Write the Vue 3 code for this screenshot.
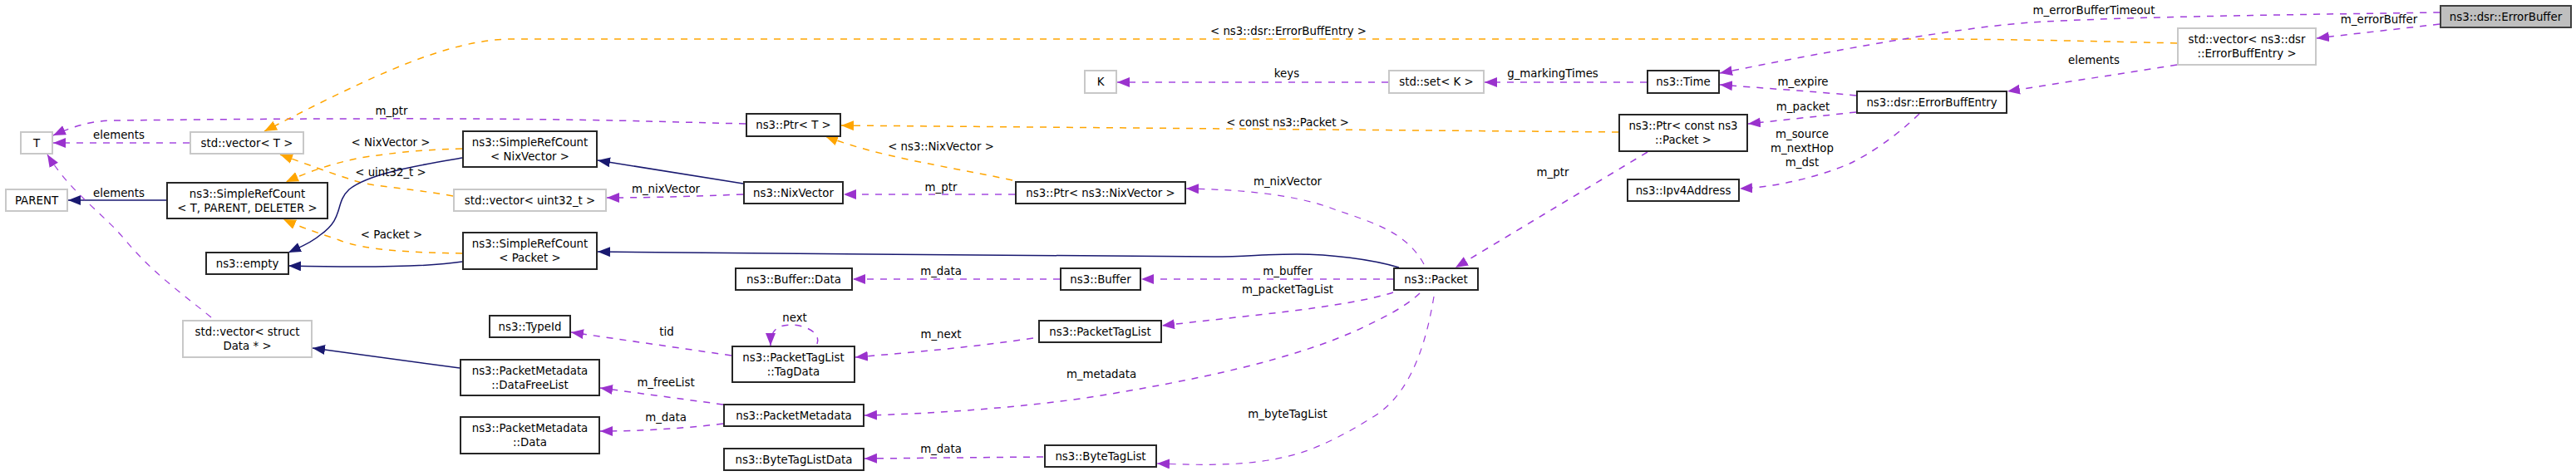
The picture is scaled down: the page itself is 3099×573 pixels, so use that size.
<script setup>
const nodes = [
  { x: 24, y: 158, w: 40, h: 28, kind: 'ghost', lines: ['T'] },
  { x: 228, y: 158, w: 138, h: 28, kind: 'ghost', lines: ['std::vector< T >'] },
  { x: 6, y: 227, w: 76, h: 28, kind: 'ghost', lines: ['PARENT'] },
  { x: 200, y: 219, w: 195, h: 45, kind: 'solid', lines: ['ns3::SimpleRefCount', '< T, PARENT, DELETER >'] },
  { x: 556, y: 157, w: 163, h: 45, kind: 'solid', lines: ['ns3::SimpleRefCount', '< NixVector >'] },
  { x: 545, y: 227, w: 185, h: 28, kind: 'ghost', lines: ['std::vector< uint32_t >'] },
  { x: 556, y: 279, w: 163, h: 46, kind: 'solid', lines: ['ns3::SimpleRefCount', '< Packet >'] },
  { x: 247, y: 303, w: 101, h: 28, kind: 'solid', lines: ['ns3::empty'] },
  { x: 219, y: 385, w: 157, h: 46, kind: 'ghost', lines: ['std::vector< struct', 'Data * >'] },
  { x: 588, y: 379, w: 99, h: 28, kind: 'solid', lines: ['ns3::TypeId'] },
  { x: 553, y: 432, w: 169, h: 45, kind: 'solid', lines: ['ns3::PacketMetadata', '::DataFreeList'] },
  { x: 553, y: 501, w: 169, h: 46, kind: 'solid', lines: ['ns3::PacketMetadata', '::Data'] },
  { x: 1304, y: 84, w: 40, h: 29, kind: 'ghost', lines: ['K'] },
  { x: 897, y: 136, w: 115, h: 29, kind: 'solid', lines: ['ns3::Ptr< T >'] },
  { x: 894, y: 218, w: 121, h: 28, kind: 'solid', lines: ['ns3::NixVector'] },
  { x: 1221, y: 218, w: 206, h: 28, kind: 'solid', lines: ['ns3::Ptr< ns3::NixVector >'] },
  { x: 884, y: 322, w: 142, h: 28, kind: 'solid', lines: ['ns3::Buffer::Data'] },
  { x: 1275, y: 322, w: 98, h: 28, kind: 'solid', lines: ['ns3::Buffer'] },
  { x: 1249, y: 385, w: 149, h: 28, kind: 'solid', lines: ['ns3::PacketTagList'] },
  { x: 880, y: 416, w: 149, h: 45, kind: 'solid', lines: ['ns3::PacketTagList', '::TagData'] },
  { x: 870, y: 486, w: 170, h: 28, kind: 'solid', lines: ['ns3::PacketMetadata'] },
  { x: 870, y: 539, w: 170, h: 28, kind: 'solid', lines: ['ns3::ByteTagListData'] },
  { x: 1256, y: 535, w: 136, h: 28, kind: 'solid', lines: ['ns3::ByteTagList'] },
  { x: 1670, y: 84, w: 116, h: 29, kind: 'ghost', lines: ['std::set< K >'] },
  { x: 1981, y: 84, w: 88, h: 29, kind: 'solid', lines: ['ns3::Time'] },
  { x: 1947, y: 137, w: 156, h: 46, kind: 'solid', lines: ['ns3::Ptr< const ns3', '::Packet >'] },
  { x: 2233, y: 109, w: 182, h: 28, kind: 'solid', lines: ['ns3::dsr::ErrorBuffEntry'] },
  { x: 1957, y: 215, w: 136, h: 28, kind: 'solid', lines: ['ns3::Ipv4Address'] },
  { x: 1676, y: 322, w: 103, h: 28, kind: 'solid', lines: ['ns3::Packet'] },
  { x: 2619, y: 33, w: 168, h: 46, kind: 'ghost', lines: ['std::vector< ns3::dsr', '::ErrorBuffEntry >'] },
  { x: 2935, y: 6, w: 159, h: 28, kind: 'focus', lines: ['ns3::dsr::ErrorBuffer'] }
]

const edges = [
  { c: 'member', d: 'M897,149 L780,146 C600,141 300,143 139,145 C110,145 88,152 64,163' },
  { c: 'member flat', d: 'M228,172 L64,172' },
  { c: 'tmpl', d: 'M2619,52 C2500,49 2400,47 2320,47 L617,47 C540,47 450,90 318,158' },
  { c: 'tmpl', d: 'M556,179 C500,180 460,186 433,190 C400,197 375,205 344,219' },
  { c: 'tmpl', d: 'M545,236 C490,226 450,225 428,218 C400,209 370,198 337,186' },
  { c: 'tmpl', d: 'M556,305 C500,304 440,302 408,289 C385,281 365,275 341,264' },
  { c: 'inherit', d: 'M200,241 L82,241' },
  { c: 'member thin', d: 'M254,382 C215,350 185,330 148,286 C125,258 85,232 57,186' },
  { c: 'inherit', d: 'M556,190 C510,198 445,208 420,228 C402,245 415,262 385,283 C375,292 362,297 347,304' },
  { c: 'inherit', d: 'M556,315 C510,322 430,322 347,320' },
  { c: 'inherit', d: 'M894,221 L719,193' },
  { c: 'inherit', d: 'M1683,322 C1650,312 1600,306 1560,306 C1520,306 1500,309 1460,309 C1300,308 900,305 719,303' },
  { c: 'member', d: 'M894,234 C840,236 790,238 730,238' },
  { c: 'member flat', d: 'M1221,234 L1015,234' },
  { c: 'tmpl', d: 'M1218,217 C1140,200 1060,190 993,164' },
  { c: 'tmpl', d: 'M1947,159 L1012,151' },
  { c: 'member flat', d: 'M1670,99 L1344,99' },
  { c: 'member flat', d: 'M1981,99 L1786,99' },
  { c: 'member thin', d: 'M1713,318 C1690,275 1640,265 1600,250 C1550,232 1480,228 1427,227' },
  { c: 'member', d: 'M1982,183 L1751,322' },
  { c: 'member flat', d: 'M1676,336 L1373,336' },
  { c: 'member flat', d: 'M1275,336 L1026,336' },
  { c: 'member', d: 'M1676,352 C1620,370 1500,380 1398,392' },
  { c: 'member', d: 'M1243,407 C1170,418 1100,424 1029,430' },
  { c: 'member', d: 'M983,414 C990,395 950,385 935,395 C928,400 927,408 927,416' },
  { c: 'member', d: 'M880,428 L687,400' },
  { c: 'member', d: 'M870,487 L722,467' },
  { c: 'member', d: 'M870,510 C820,516 770,519 722,519' },
  { c: 'inherit', d: 'M553,443 L376,419' },
  { c: 'member', d: 'M1708,353 C1690,370 1665,382 1640,394 C1560,432 1440,458 1300,480 C1210,492 1120,498 1040,500' },
  { c: 'member thin', d: 'M1725,357 C1713,430 1690,480 1650,503 C1620,522 1590,537 1565,545 C1510,562 1450,560 1392,558' },
  { c: 'member', d: 'M1255,550 L1040,552' },
  { c: 'member', d: 'M2935,15 C2800,17 2550,20 2444,27 C2370,32 2250,52 2069,88' },
  { c: 'member', d: 'M2233,115 C2180,110 2120,106 2069,102' },
  { c: 'member', d: 'M2233,135 L2103,149' },
  { c: 'member', d: 'M2309,137 C2280,165 2250,185 2225,197 C2190,212 2140,225 2093,227' },
  { c: 'member', d: 'M2619,78 L2415,110' },
  { c: 'member', d: 'M2935,29 L2787,46' }
]

const labels = [
  { x: 471, y: 133, t: ['m_ptr'] },
  { x: 143, y: 162, t: ['elements'] },
  { x: 470, y: 171, t: ['< NixVector >'] },
  { x: 470, y: 207, t: ['< uint32_t >'] },
  { x: 143, y: 232, t: ['elements'] },
  { x: 471, y: 282, t: ['< Packet >'] },
  { x: 1550, y: 37, t: ['< ns3::dsr::ErrorBuffEntry >'] },
  { x: 1548, y: 88, t: ['keys'] },
  { x: 1868, y: 88, t: ['g_markingTimes'] },
  { x: 2169, y: 98, t: ['m_expire'] },
  { x: 2169, y: 128, t: ['m_packet'] },
  { x: 2168, y: 178, t: ['m_source', 'm_nextHop', 'm_dst'] },
  { x: 1868, y: 207, t: ['m_ptr'] },
  { x: 1549, y: 218, t: ['m_nixVector'] },
  { x: 1549, y: 147, t: ['< const ns3::Packet >'] },
  { x: 1132, y: 176, t: ['< ns3::NixVector >'] },
  { x: 1132, y: 225, t: ['m_ptr'] },
  { x: 801, y: 227, t: ['m_nixVector'] },
  { x: 1132, y: 326, t: ['m_data'] },
  { x: 1549, y: 326, t: ['m_buffer'] },
  { x: 1549, y: 348, t: ['m_packetTagList'] },
  { x: 956, y: 382, t: ['next'] },
  { x: 802, y: 399, t: ['tid'] },
  { x: 1132, y: 402, t: ['m_next'] },
  { x: 801, y: 460, t: ['m_freeList'] },
  { x: 801, y: 502, t: ['m_data'] },
  { x: 1325, y: 450, t: ['m_metadata'] },
  { x: 1549, y: 498, t: ['m_byteTagList'] },
  { x: 1132, y: 540, t: ['m_data'] },
  { x: 2519, y: 12, t: ['m_errorBufferTimeout'] },
  { x: 2862, y: 23, t: ['m_errorBuffer'] },
  { x: 2519, y: 72, t: ['elements'] }
]

const nodeBox = (n) => ({ left: n.x + 'px', top: n.y + 'px', width: n.w + 'px', height: n.h + 'px' })
const labelPos = (l) => ({ left: l.x + 'px', top: l.y + 'px' })
const markerFor = (c) => {
  if (c.startsWith('member')) return 'url(#head-member)'
  if (c === 'tmpl') return 'url(#head-tmpl)'
  return 'url(#head-inherit)'
}
</script>

<template>
  <div class="canvas">
    <svg class="wires" width="3099" height="573" viewBox="0 0 3099 573">
      <defs>
        <marker id="head-member" markerUnits="userSpaceOnUse" markerWidth="16" markerHeight="14" refX="15" refY="6" orient="auto">
          <path d="M0,0 L15,6 L0,12 Z" fill="#9a32cd" />
        </marker>
        <marker id="head-tmpl" markerUnits="userSpaceOnUse" markerWidth="16" markerHeight="14" refX="15" refY="6" orient="auto">
          <path d="M0,0 L15,6 L0,12 Z" fill="#ffa500" />
        </marker>
        <marker id="head-inherit" markerUnits="userSpaceOnUse" markerWidth="16" markerHeight="14" refX="15" refY="6" orient="auto">
          <path d="M0,0 L15,6 L0,12 Z" fill="#191970" />
        </marker>
      </defs>
      <path
        v-for="(e, i) in edges"
        :key="i"
        :d="e.d"
        :class="['wire', e.c]"
        :marker-end="markerFor(e.c)"
      />
    </svg>
    <div v-for="n in nodes" :key="n.x + '-' + n.y" class="node" :class="n.kind" :style="nodeBox(n)">
      <span v-for="line in n.lines" :key="line">{{ line }}</span>
    </div>
    <div v-for="(l, i) in labels" :key="'l' + i" class="label" :style="labelPos(l)">
      <span v-for="line in l.t" :key="line">{{ line }}</span>
    </div>
  </div>
</template>

<style>
html, body { margin: 0; background: #fff; }
</style>

<style scoped>
.canvas {
  position: relative;
  width: 3099px;
  height: 573px;
  overflow: hidden;
  background: #fff;
  font-family: "DejaVu Sans", sans-serif;
  font-size: 13.33px;
  line-height: 17px;
  color: #000;
}
.wires { position: absolute; left: 0; top: 0; }
.wire { fill: none; stroke-width: 1.5; stroke-dasharray: 8 8; }
.wire.member { stroke: #9f3ddb; }
.wire.thin { stroke-width: 1.2; }
.wire.flat { stroke: #bb77e8; stroke-width: 2.2; }
.wire.tmpl { stroke: #ffa500; }
.wire.inherit { stroke: #191970; stroke-dasharray: none; }
.node {
  position: absolute;
  box-sizing: border-box;
  display: flex;
  flex-direction: column;
  align-items: center;
  justify-content: center;
  background: #fff;
  white-space: pre;
}
.node.solid { border: 2px solid #262626; }
.node.ghost { border: 2px solid #c8c8c8; }
.node.focus { border: 2px solid #404040; background: #bfbfbf; }
.label {
  position: absolute;
  display: flex;
  flex-direction: column;
  align-items: center;
  transform: translate(-50%, -50%);
  white-space: pre;
}
</style>
